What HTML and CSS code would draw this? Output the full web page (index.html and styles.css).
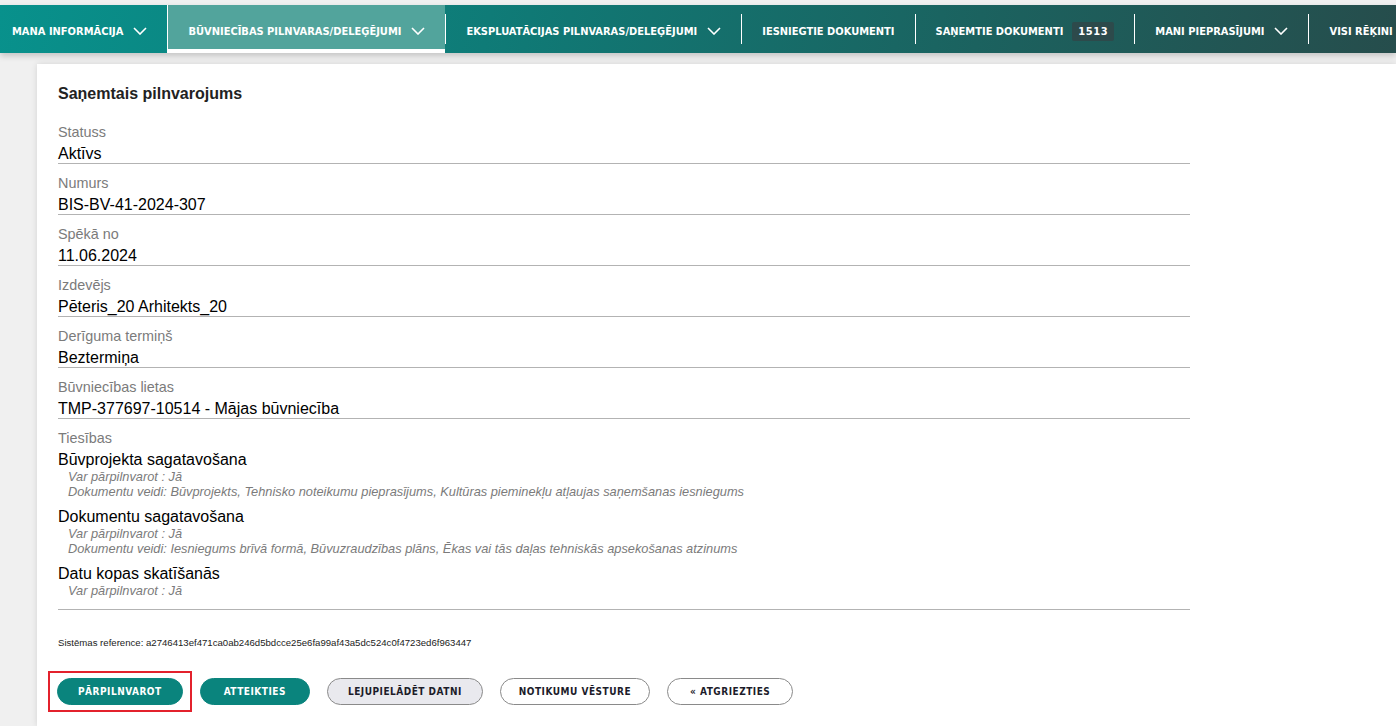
FILE: index.html
```html
<!DOCTYPE html>
<html lang="lv">
<head>
  <meta charset="UTF-8" />
  <title>Saņemtais pilnvarojums</title>
  <link rel="stylesheet" href="styles.css">
</head>
<body>

  <nav class="topnav">
    <a class="nav-item first">Mana informācija
      <svg class="chev" viewBox="0 0 14 8"><path d="M1 1l6 6 6-6" /></svg>
    </a>
    <a class="nav-item active">Būvniecības pilnvaras/deleģējumi
      <svg class="chev" viewBox="0 0 14 8"><path d="M1 1l6 6 6-6" /></svg>
    </a>
    <a class="nav-item">Ekspluatācijas pilnvaras/deleģējumi
      <svg class="chev" viewBox="0 0 14 8"><path d="M1 1l6 6 6-6" /></svg>
    </a>
    <a class="nav-item">Iesniegtie dokumenti</a>
    <a class="nav-item">Saņemtie dokumenti <span class="badge">1513</span></a>
    <a class="nav-item">Mani pieprasījumi
      <svg class="chev" viewBox="0 0 14 8"><path d="M1 1l6 6 6-6" /></svg>
    </a>
    <a class="nav-item">Visi rēķini</a>
  </nav>

  <main class="card">
    <h2 class="card-title">Saņemtais pilnvarojums</h2>

    <div class="field">
      <div class="label">Statuss</div>
      <div class="value">Aktīvs</div>
    </div>
    <div class="field">
      <div class="label">Numurs</div>
      <div class="value">BIS-BV-41-2024-307</div>
    </div>
    <div class="field">
      <div class="label">Spēkā no</div>
      <div class="value">11.06.2024</div>
    </div>
    <div class="field">
      <div class="label">Izdevējs</div>
      <div class="value">Pēteris_20 Arhitekts_20</div>
    </div>
    <div class="field">
      <div class="label">Derīguma termiņš</div>
      <div class="value">Beztermiņa</div>
    </div>
    <div class="field">
      <div class="label">Būvniecības lietas</div>
      <div class="value">TMP-377697-10514 - Mājas būvniecība</div>
    </div>
    <div class="field rights">
      <div class="label">Tiesības</div>
      <div class="right">
        <div class="right-name">Būvprojekta sagatavošana</div>
        <div class="right-note">Var pārpilnvarot : Jā</div>
        <div class="right-note">Dokumentu veidi: Būvprojekts, Tehnisko noteikumu pieprasījums, Kultūras pieminekļu atļaujas saņemšanas iesniegums</div>
      </div>
      <div class="right">
        <div class="right-name">Dokumentu sagatavošana</div>
        <div class="right-note">Var pārpilnvarot : Jā</div>
        <div class="right-note">Dokumentu veidi: Iesniegums brīvā formā, Būvuzraudzības plāns, Ēkas vai tās daļas tehniskās apsekošanas atzinums</div>
      </div>
      <div class="right">
        <div class="right-name">Datu kopas skatīšanās</div>
        <div class="right-note">Var pārpilnvarot : Jā</div>
      </div>
    </div>

    <p class="sysref">Sistēmas reference: a2746413ef471ca0ab246d5bdcce25e6fa99af43a5dc524c0f4723ed6f963447</p>

    <div class="actions">
      <span class="highlight"><button class="btn primary">Pārpilnvarot</button></span>
      <button class="btn primary decline">Atteikties</button>
      <button class="btn grey">Lejupielādēt datni</button>
      <button class="btn outline">Notikumu vēsture</button>
      <button class="btn outline back">« Atgriezties</button>
    </div>
  </main>

</body>
</html>
```

FILE: styles.css
```css
body {
  margin: 0;
  padding: 5px 0 0;
  height: 721px;
  background: #f0f0f0;
  font-family: "Liberation Sans", Arial, sans-serif;
  color: #000;
  overflow: hidden;
}
.topnav {
  display: flex;
  align-items: center;
  height: 48px;
  background: linear-gradient(100deg, #08918c 0%, #0f7b77 35%, #1b625f 70%, #264d4c 100%);
  box-shadow: 0 3px 6px rgba(0, 0, 0, 0.18);
}
.nav-item {
  box-sizing: border-box;
  display: flex;
  align-items: center;
  height: 30px;
  padding: 4px 20px 0 20px;
  border-left: 1px solid #fff;
  color: #fff;
  font-family: "DejaVu Sans Condensed", sans-serif;
  font-stretch: condensed;
  font-weight: bold;
  font-size: 11px;
  text-transform: uppercase;
  white-space: nowrap;
}
.nav-item.first {
  border-left: none;
  padding-left: 12px;
}
.nav-item.active {
  height: 48px;
  padding-top: 8px;
  background: #52a49c;
  border-bottom: 4px solid #fff;
}
.chev {
  width: 14px;
  height: 8px;
  margin-left: 10px;
  fill: none;
  stroke: #fff;
  stroke-width: 1.6;
}
.badge {
  margin-left: 9px;
  padding: 3px 6px;
  background: #2d4a4b;
  border-radius: 2px;
  font-size: 11px;
  letter-spacing: 0.6px;
}
.card {
  margin: 11px 0 0 37px;
  padding: 20px 206px 14px 21px;
  background: #fff;
  box-shadow: 0 0 6px rgba(0, 0, 0, 0.12);
}
.card-title {
  margin: 0 0 9px;
  font-size: 16px;
  line-height: 20px;
  font-weight: bold;
  color: #222;
}
.field {
  padding-top: 10px;
  border-bottom: 1px solid #b3b3b3;
}
.label {
  font-size: 14.4px;
  line-height: 18px;
  color: #7b7b7b;
}
.value,
.right-name {
  margin-top: 4px;
  font-size: 16px;
  line-height: 18px;
}
.right-name {
  margin-top: 0;
}
.rights {
  padding-bottom: 2px;
}
.right {
  margin-bottom: 9px;
}
.rights .label + .right {
  margin-top: 4px;
}
.right-note {
  padding-left: 10px;
  font-size: 12.8px;
  line-height: 15px;
  font-style: italic;
  color: #7b7b7b;
}
.sysref {
  margin: 27px 0 22px;
  font-size: 9.6px;
  line-height: 12px;
  color: #222;
}
.actions {
  display: flex;
  align-items: center;
  gap: 17px;
  margin-left: -10px;
}
.highlight {
  display: inline-block;
  margin-right: -9px;
  padding: 5px 7px;
  border: 2px solid #e3212c;
}
.btn {
  display: block;
  height: 27px;
  padding: 0 20px;
  border-radius: 14px;
  border: 1px solid #8a8a8a;
  font-family: "DejaVu Sans Condensed", sans-serif;
  font-stretch: condensed;
  font-weight: bold;
  font-size: 10px;
  letter-spacing: 0.5px;
  text-transform: uppercase;
  color: #1c1c2a;
  background: #fff;
}
.btn.primary {
  background: #0a847d;
  border-color: #0a847d;
  color: #fff;
}
.btn.decline {
  padding: 0 23px;
}
.btn.grey {
  background: #e9e9ee;
}
.btn.outline {
  padding: 0 18px;
}
.btn.back {
  padding: 0 22px;
}
```
